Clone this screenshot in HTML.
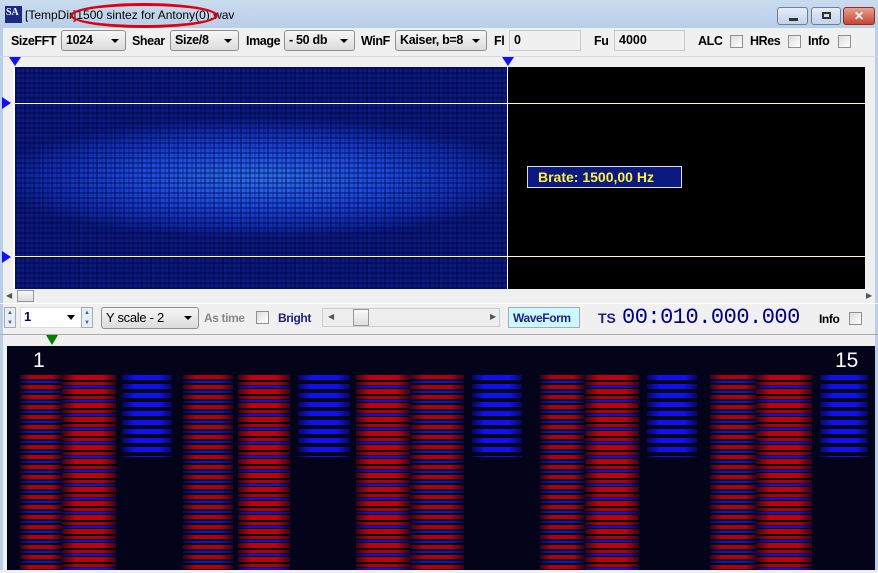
<!DOCTYPE html>
<html><head><meta charset="utf-8"><style>
*{margin:0;padding:0;box-sizing:border-box}
body{width:878px;height:573px;overflow:hidden;background:#f0f0f0;font-family:"Liberation Sans",sans-serif;position:relative}
.a{position:absolute}
.title{left:0;top:0;width:878px;height:28px;background:linear-gradient(#c9dbef,#b9cfe8)}
.tb{font-weight:bold;font-size:12.5px;letter-spacing:-0.4px;color:#000}
.combo{background:linear-gradient(#f6f6f6,#dcdcdc);border:1px solid #8e8f8f;border-radius:3px;height:21px;font-size:12.5px;letter-spacing:-0.3px;font-weight:bold;padding:2px 4px}
.combo:after{content:"";position:absolute;right:6px;top:8px;border:4px solid transparent;border-top:4px solid #000}
.edit{background:#f0f0f0;border:1px solid #c8c8c8;height:21px;font-size:12.5px;font-weight:bold;padding:2px 4px}
.cb{width:13px;height:13px;border:1px solid #8f8f8f;background:linear-gradient(135deg,#ddd,#fff)}
.col{position:absolute;top:375px;height:195px}
.col:after{content:"";position:absolute;inset:0;background:linear-gradient(90deg,rgba(3,3,26,.7),rgba(3,3,26,0) 25%,rgba(3,3,26,0) 75%,rgba(3,3,26,.7))}
.r{background:repeating-linear-gradient(180deg,#b00010 0 4px,#0a0010 4px 6px,#1010e0 6px 8px,#050010 8px 10px)}
.r2{background:repeating-linear-gradient(180deg,#c00010 0 5px,#000 5px 7px,#b00010 7px 10px,#050010 10px 11px,#1212e0 11px 13px,#050010 13px 14px)}
.b{height:82px;background:repeating-linear-gradient(180deg,#1010f0 0 5px,#05051a 5px 9px)}
.tri{width:0;height:0;border:6px solid transparent}
</style></head><body>
<div class="a title"></div>
<div class="a" style="left:5px;top:6px;width:17px;height:17px;background:#1a2a80;color:#fff;font:bold 10px 'Liberation Serif',serif;padding:1px">SA</div>
<div class="a" style="left:25px;top:8px;font-size:12px;color:#000">[TempDir]1500 sintez for Antony(0).wav</div>
<div class="a" style="left:70px;top:3px;width:148px;height:25px;border:3px solid #e00010;border-radius:50%"></div>
<div class="a" style="left:777px;top:7px;width:31px;height:18px;border:1px solid #6d7f98;border-radius:3px;background:linear-gradient(#e4ecf7,#c3d3ea)"><div class="a" style="left:11px;top:10px;width:9px;height:3px;background:#333"></div></div>
<div class="a" style="left:811px;top:7px;width:30px;height:18px;border:1px solid #6d7f98;border-radius:3px;background:linear-gradient(#e4ecf7,#c3d3ea)"><div class="a" style="left:10px;top:4px;width:9px;height:7px;border:2px solid #333"></div></div>
<div class="a" style="left:843px;top:7px;width:32px;height:18px;border:1px solid #8a3020;border-radius:3px;background:linear-gradient(#e8a090,#c84530);color:#fff;font:bold 12px sans-serif;text-align:center;line-height:16px">✕</div>
<div class="a" style="left:0;top:28px;width:3px;height:545px;background:#b9cfe8"></div>
<div class="a" style="left:875px;top:28px;width:3px;height:545px;background:#b9cfe8"></div>

<div class="a tb" style="left:11px;top:34px">SizeFFT</div>
<div class="a combo" style="left:61px;top:30px;width:65px">1024</div>
<div class="a tb" style="left:132px;top:34px">Shear</div>
<div class="a combo" style="left:170px;top:30px;width:69px">Size/8</div>
<div class="a tb" style="left:246px;top:34px">Image</div>
<div class="a combo" style="left:284px;top:30px;width:71px">- 50 db</div>
<div class="a tb" style="left:361px;top:34px">WinF</div>
<div class="a combo" style="left:395px;top:30px;width:92px">Kaiser, b=8</div>
<div class="a tb" style="left:494px;top:34px">Fl</div>
<div class="a edit" style="left:509px;top:30px;width:72px">0</div>
<div class="a tb" style="left:594px;top:34px">Fu</div>
<div class="a edit" style="left:614px;top:30px;width:71px">4000</div>
<div class="a tb" style="left:698px;top:34px">ALC</div><div class="a cb" style="left:730px;top:35px"></div>
<div class="a tb" style="left:750px;top:34px">HRes</div><div class="a cb" style="left:788px;top:35px"></div>
<div class="a tb" style="left:808px;top:34px">Info</div><div class="a cb" style="left:838px;top:35px"></div>

<div class="a" style="left:0;top:56px;width:878px;height:1px;background:#d8d8d8"></div>
<div class="a tri" style="left:9px;top:57px;border-top:9px solid #1010ff;border-bottom:0"></div>
<div class="a tri" style="left:502px;top:57px;border-top:9px solid #1010ff;border-bottom:0"></div>
<div class="a" style="left:13px;top:67px;width:852px;height:222px;background:#000"></div>
<div class="a" style="left:15px;top:67px;width:492px;height:222px;background:radial-gradient(ellipse 270px 60px at 50% 50%,#2a70f0 0%,#1c4ae0 45%,#102cb0 80%,#0a1a80 100%),#0a1a80"></div>
<div class="a" style="left:15px;top:67px;width:492px;height:222px;background:repeating-linear-gradient(90deg,rgba(0,0,50,.35) 0 2px,transparent 2px 5px,rgba(0,0,40,.2) 5px 7px,transparent 7px 9px),repeating-linear-gradient(180deg,rgba(0,0,40,.35) 0 2px,transparent 2px 5px)"></div>
<div class="a" style="left:13px;top:67px;width:2px;height:222px;background:#fff"></div>
<div class="a" style="left:507px;top:67px;width:1px;height:222px;background:#fff"></div>
<div class="a" style="left:13px;top:103px;width:852px;height:1px;background:#fff8c0"></div>
<div class="a" style="left:13px;top:256px;width:852px;height:1px;background:#fff8c0"></div>
<div class="a tri" style="left:2px;top:97px;border-left:9px solid #1010ff;border-right:0"></div>
<div class="a tri" style="left:2px;top:251px;border-left:9px solid #1010ff;border-right:0"></div>
<div class="a" style="left:527px;top:166px;width:155px;height:22px;background:#0a1a80;border:1px solid #ddd;color:#fff040;font-weight:bold;font-size:14px;padding:2px 10px">Brate: 1500,00 Hz</div>

<div class="a" style="left:5px;top:290px;width:868px;height:13px;background:#f0f0f0"></div>
<div class="a" style="left:6px;top:291px;font-size:8px;color:#555">◀</div>
<div class="a" style="left:17px;top:290px;width:17px;height:12px;border:1px solid #999;background:linear-gradient(#f8f8f8,#ddd)"></div>
<div class="a" style="left:866px;top:291px;font-size:8px;color:#555">▶</div>
<div class="a" style="left:0;top:303px;width:878px;height:1px;background:#fff"></div>

<div class="a" style="left:4px;top:307px;width:12px;height:21px;border:1px solid #aaa;background:#e8eef6;font-size:6px;color:#4060a0;line-height:10px;text-align:center">▲<br>▼</div>
<div class="a" style="left:20px;top:307px;width:70px;height:21px;background:#fff;border:1px solid #ddd;font-size:13px;color:#000080;font-weight:bold;padding:1px 3px">1</div>
<div class="a" style="left:67px;top:315px;border:4px solid transparent;border-top:5px solid #000"></div>
<div class="a" style="left:81px;top:307px;width:12px;height:21px;border:1px solid #aaa;background:#e8eef6;font-size:6px;color:#4060a0;line-height:10px;text-align:center">▲<br>▼</div>
<div class="a combo" style="left:101px;top:307px;width:98px;height:22px;font-weight:normal;color:#000;font-size:13px">Y scale - 2</div>
<div class="a" style="left:204px;top:311px;font-size:12px;font-weight:bold;letter-spacing:-0.4px;color:#888">As time</div>
<div class="a cb" style="left:256px;top:311px"></div>
<div class="a" style="left:278px;top:311px;font-size:12px;font-weight:bold;letter-spacing:-0.4px;color:#202080">Bright</div>
<div class="a" style="left:322px;top:308px;width:178px;height:19px;border:1px solid #ccc;background:#eee"></div>
<div class="a" style="left:328px;top:312px;font-size:8px;color:#555">◀</div>
<div class="a" style="left:353px;top:309px;width:16px;height:17px;border:1px solid #999;background:linear-gradient(#fafafa,#ddd)"></div>
<div class="a" style="left:490px;top:312px;font-size:8px;color:#555">▶</div>
<div class="a" style="left:508px;top:307px;width:72px;height:21px;border:1px solid #aaa;background:#ccf8ff;font-size:12px;font-weight:bold;letter-spacing:-0.4px;color:#202080;padding:3px 4px">WaveForm</div>
<div class="a" style="left:598px;top:310px;font-size:14px;font-weight:bold;color:#202080">TS</div>
<div class="a" style="left:622px;top:305px;font-size:22px;color:#000080;font-family:'Liberation Mono',monospace;letter-spacing:-0.5px">00:010.000.000</div>
<div class="a" style="left:819px;top:312px;font-size:12px;font-weight:bold;letter-spacing:-0.4px">Info</div>
<div class="a cb" style="left:849px;top:312px"></div>
<div class="a" style="left:0;top:334px;width:878px;height:1px;background:#aaa"></div>
<div class="a tri" style="left:46px;top:335px;border-top:10px solid #008000;border-bottom:0"></div>

<div class="a" style="left:7px;top:346px;width:868px;height:224px;background:#03031a"></div>
<div class="a" style="left:33px;top:349px;color:#fff;font-size:21px">1</div>
<div class="a" style="left:835px;top:349px;color:#fff;font-size:21px">15</div>
<div class="col r" style="left:20px;width:42px"></div>
<div class="col r2" style="left:62px;width:54px"></div>
<div class="col b" style="left:122px;width:50px"></div>
<div class="col r" style="left:183px;width:50px"></div>
<div class="col r2" style="left:238px;width:52px"></div>
<div class="col b" style="left:298px;width:52px"></div>
<div class="col r2" style="left:356px;width:54px"></div>
<div class="col r" style="left:410px;width:54px"></div>
<div class="col b" style="left:472px;width:50px"></div>
<div class="col r" style="left:540px;width:44px"></div>
<div class="col r2" style="left:585px;width:54px"></div>
<div class="col b" style="left:647px;width:50px"></div>
<div class="col r" style="left:710px;width:47px"></div>
<div class="col r2" style="left:756px;width:56px"></div>
<div class="col b" style="left:820px;width:48px"></div>
<div class="a" style="left:0;top:570px;width:878px;height:3px;background:#f0f0f0"></div>
</body></html>
